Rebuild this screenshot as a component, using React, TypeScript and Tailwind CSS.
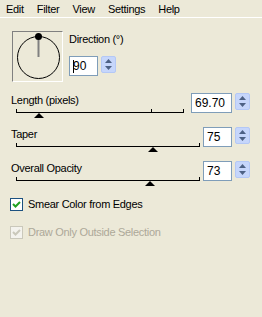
import React from "react";

const MENU = ["Edit", "Filter", "View", "Settings", "Help"];

function Spin() {
  return (
    <div className="w-[15px] h-[17px] rounded-[2px] bg-[#c6d6fb] border border-[#b4c8f6] flex flex-col items-center justify-center gap-[3px]">
      <svg width="7" height="4" viewBox="0 0 7 4">
        <path d="M0 4 L3.5 0 L7 4 Z" fill="#4d6185" />
      </svg>
      <svg width="7" height="4" viewBox="0 0 7 4">
        <path d="M0 0 L3.5 4 L7 0 Z" fill="#4d6185" />
      </svg>
    </div>
  );
}

function NumBox({ value, w, caret }: { value: string; w: string; caret?: boolean }) {
  return (
    <div className={`${w} h-[20px] bg-white border border-[#7f9db9] flex items-center pl-[3px] text-[12px] tracking-normal text-black`}>
      {caret && <span className="w-px h-[13px] bg-black -mr-px" />}
      <span>{value}</span>
    </div>
  );
}

function Track({ width, thumb, mid }: { width: number; thumb: number; mid?: number }) {
  return (
    <svg width={width} height="12" className="block">
      <line x1="5" y1="5.5" x2={width - 3} y2="5.5" stroke="#000" />
      <line x1="5.5" y1="2" x2="5.5" y2="6" stroke="#000" />
      <line x1={width - 3.5} y1="2" x2={width - 3.5} y2="6" stroke="#000" />
      {mid !== undefined && <line x1={mid + 0.5} y1="2" x2={mid + 0.5} y2="6" stroke="#000" />}
      <path d={`M${thumb - 5} 11 L${thumb} 6 L${thumb + 5} 11 Z`} fill="#000" />
    </svg>
  );
}

function SliderRow({
  label, value, trackW, thumb, mid, boxW,
}: {
  label: string; value: string; trackW: number; thumb: number; mid?: number; boxW: string;
}) {
  return (
    <div className="flex pl-[11px] pr-[12px]">
      <div className="flex flex-col">
        <div className="h-[14px] leading-[14px]">{label}</div>
        <Track width={trackW} thumb={thumb} mid={mid} />
      </div>
      <div className="ml-auto flex items-start gap-[3px]">
        <NumBox value={value} w={boxW} />
        <Spin />
      </div>
    </div>
  );
}

export default function App() {
  return (
    <div className="w-[262px] h-[317px] bg-[#ece9d8] font-['Liberation_Sans',Arial,sans-serif] text-[11px] tracking-[-0.3px] text-black overflow-hidden">
      <div className="h-[18px] flex items-center gap-[13px] pl-[6px] border-b border-white">
        {MENU.map((m) => (
          <span key={m} className="leading-[14px]">{m}</span>
        ))}
      </div>

      {/* direction */}
      <div className="flex mt-[13px] pl-[12px]">
        <div className="w-[51px] h-[51px] border border-t-[#808080] border-l-[#808080] border-r-white border-b-white">
          <svg width="49" height="49" viewBox="0 0 49 49">
            <circle cx="25.5" cy="25.5" r="21" fill="none" stroke="#000" />
            <line x1="25.5" y1="5" x2="25.5" y2="25" stroke="#808080" strokeWidth="2" />
            <circle cx="25.5" cy="4.5" r="3.5" fill="#000" />
          </svg>
        </div>
        <div className="ml-[6px] flex flex-col">
          <div className="mt-[1px] h-[14px] leading-[14px]">Direction (°)</div>
          <div className="mt-[10px] flex items-start gap-[3px]">
            <NumBox value="90" w="w-[29px]" caret />
            <Spin />
          </div>
        </div>
      </div>

      <div className="mt-[11px] flex flex-col gap-[8px]">
        <SliderRow label="Length (pixels)" value="69.70" trackW={176} thumb={28} mid={140} boxW="w-[41px]" />
        <SliderRow label="Taper" value="75" trackW={192} thumb={142} boxW="w-[29px]" />
        <SliderRow label="Overall Opacity" value="73" trackW={192} thumb={139} boxW="w-[29px]" />
      </div>

      <div className="mt-[10px] pl-[10px] flex flex-col gap-[14px]">
        <div className="flex items-center gap-[5px]">
          <div className="w-[13px] h-[13px] border border-[#1c5180] bg-white flex items-center justify-center">
            <svg width="9" height="9" viewBox="0 0 9 9">
              <path d="M1 4 L3.5 6.5 L8 2" fill="none" stroke="#21a121" strokeWidth="2" />
            </svg>
          </div>
          <span className="leading-[14px]">Smear Color from Edges</span>
        </div>
        <div className="flex items-center gap-[5px]">
          <div className="w-[13px] h-[13px] border border-[#cac8bb] bg-[#f4f3ee] flex items-center justify-center">
            <svg width="9" height="9" viewBox="0 0 9 9">
              <path d="M1 4 L3.5 6.5 L8 2" fill="none" stroke="#cac8bb" strokeWidth="2" />
            </svg>
          </div>
          <span className="leading-[14px] text-[#aca899]">Draw Only Outside Selection</span>
        </div>
      </div>
    </div>
  );
}
